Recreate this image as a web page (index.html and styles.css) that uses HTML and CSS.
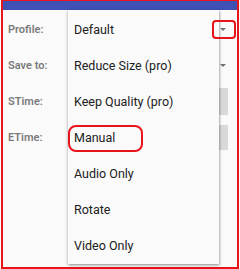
FILE: index.html
```html
<!DOCTYPE html>
<html lang="en">

<head>
    <meta charset="UTF-8">
    <meta name="viewport" content="width=device-width, initial-scale=1.0">
    <title>Profile</title>
    <link rel="stylesheet" href="styles.css">
</head>

<body>
    <div class="frame">
        <div class="appbar"></div>

        <!-- Form cài đặt -->
        <div class="form">
            <div class="row">
                <span class="label">Profile:</span>
                <div class="spinner"><span class="arrow"></span></div>
            </div>
            <div class="row">
                <span class="label">Save to:</span>
                <div class="spinner"><span class="arrow"></span></div>
            </div>
            <div class="row">
                <span class="label">STime:</span>
                <div class="input tall"></div>
            </div>
            <div class="row">
                <span class="label">ETime:</span>
                <div class="input"></div>
            </div>
        </div>

        <!-- Menu chọn profile -->
        <ul class="menu">
            <li>Default</li>
            <li>Reduce Size (pro)</li>
            <li>Keep Quality (pro)</li>
            <li>Manual</li>
            <li>Audio Only</li>
            <li>Rotate</li>
            <li>Video Only</li>
        </ul>

        <!-- Khung đánh dấu -->
        <div class="mark mark-arrow"></div>
        <div class="mark mark-manual"></div>
    </div>
</body>

</html>
```

FILE: styles.css
```css
body {
    margin: 0;
    background-color: #fff;
    font-family: Roboto, "Liberation Sans", sans-serif;
}

.frame {
    position: relative;
    box-sizing: border-box;
    width: 238px;
    height: 269px;
    margin-left: 1px;
    border: 2px solid #e8141c;
    border-top-width: 1px;
    background-color: #fafafa;
}

.appbar {
    height: 9px;
    background-color: #3f51b5;
}

/* Form */
.form {
    padding: 1px 9px 0 5px;
}

.row {
    height: 36px;
    display: flex;
    align-items: center;
}

.label {
    width: 60px;
    font-size: 11px;
    font-weight: 600;
    color: #7a7a7a;
}

.spinner {
    flex: 1;
    height: 28px;
    display: flex;
    align-items: center;
    justify-content: flex-end;
    padding-right: 2px;
}

.arrow {
    width: 0;
    height: 0;
    border-left: 3px solid transparent;
    border-right: 3px solid transparent;
    border-top: 3px solid #707070;
}

.input {
    flex: 1;
    height: 25px;
    background-color: #d9d9d9;
}

.input.tall {
    height: 27px;
}

/* Menu */
.menu {
    position: absolute;
    left: 65px;
    top: 9px;
    width: 151px;
    height: 254px;
    margin: 0;
    padding: 1px 0 0;
    list-style-type: none;
    box-sizing: border-box;
    background-color: #fafafa;
    box-shadow: 0 1px 3px rgba(0, 0, 0, 0.35), 1px 1px 2px rgba(0, 0, 0, 0.15);
}

.menu li {
    height: 36px;
    display: flex;
    align-items: center;
    padding-left: 6px;
    font-size: 12.5px;
    color: #212121;
}

/* Khung đỏ */
.mark {
    position: absolute;
    box-sizing: border-box;
    border: 2px solid #e8141c;
}

.mark-arrow {
    left: 209px;
    top: 19px;
    width: 24px;
    height: 19px;
    border-radius: 4px;
}

.mark-manual {
    left: 65px;
    top: 124px;
    width: 75px;
    height: 27px;
    border-radius: 8px;
}
```
